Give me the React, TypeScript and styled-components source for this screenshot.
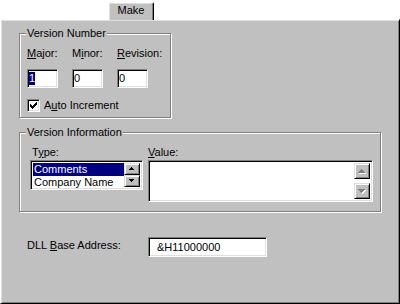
import React from "react";
import styled, { createGlobalStyle } from "styled-components";

const GlobalStyle = createGlobalStyle`
  html, body { margin: 0; padding: 0; background: #fff; }
  body {
    font-family: "Liberation Sans", Arial, sans-serif;
    font-size: 11px;
    color: #000;
  }
  * { box-sizing: border-box; }
`;

const Window = styled.div`
  width: 400px;
  height: 304px;
  display: flex;
  flex-direction: column;
  background: #fff;
`;

const TabStrip = styled.div`
  height: 19px;
  display: flex;
  align-items: flex-end;
  padding-left: 108px;
  position: relative;
  z-index: 1;
`;

const Tab = styled.div`
  width: 46px;
  height: 18px;
  margin-bottom: -1px;
  background: #c0c0c0;
  border-top: 1px solid #fff;
  border-left: 1px solid #fff;
  border-right: 1px solid #000;
  box-shadow: inset -1px 0 #808080, inset 1px 1px #dfdfdf;
  border-radius: 2px 2px 0 0;
  display: flex;
  align-items: center;
  justify-content: center;
  padding-bottom: 2px;
  line-height: 13px;
`;

const Panel = styled.div`
  height: 285px;
  background: #c0c0c0;
  border: 1px solid;
  border-color: #fff #000 #000 #fff;
  box-shadow: inset 1px 1px #dfdfdf, inset -1px -1px #808080;
  padding: 13px 0 0 18px;
  display: flex;
  flex-direction: column;
  align-items: flex-start;
`;

const GroupBox = styled.div<{ $w: number; $h: number; $pad: string; $mt?: number }>`
  position: relative;
  width: ${(p) => p.$w}px;
  height: ${(p) => p.$h}px;
  margin-top: ${(p) => p.$mt ?? 0}px;
  padding: ${(p) => p.$pad};
  border: 1px solid #808080;
  box-shadow: inset 1px 1px #fff, 1px 1px #fff;
`;

const Legend = styled.span`
  position: absolute;
  top: -7px;
  left: 6px;
  padding: 0 1px;
  background: #c0c0c0;
  line-height: 13px;
  white-space: nowrap;
`;

const Label = styled.span<{ $indent?: number }>`
  display: block;
  line-height: 13px;
  padding-left: ${(p) => p.$indent ?? 0}px;
  white-space: nowrap;
`;

const Key = styled.span`
  text-decoration: underline;
`;

const VersionGrid = styled.div`
  display: grid;
  grid-template-columns: repeat(3, 45px);
  row-gap: 9px;
`;

const Field = styled.div<{ $w: number; $h: number; $pl?: number }>`
  width: ${(p) => p.$w}px;
  height: ${(p) => p.$h}px;
  background: #fff;
  border: 1px solid;
  border-color: #808080 #fff #fff #808080;
  box-shadow: inset 1px 1px #000, inset -1px -1px #dfdfdf;
  padding: 1px 1px 1px ${(p) => (p.$pl ?? 0) + 1}px;
  display: flex;
  align-items: center;
  line-height: 13px;
  white-space: nowrap;
`;

const Selected = styled.span`
  display: inline-block;
  background: #000080;
  color: #fff;
  line-height: 13px;
`;

const CheckRow = styled.div`
  display: flex;
  align-items: center;
  gap: 4px;
  margin-top: 11px;
`;

const CheckBox = styled.div`
  width: 13px;
  height: 13px;
  background: #fff;
  border: 1px solid;
  border-color: #808080 #fff #fff #808080;
  box-shadow: inset 1px 1px #000, inset -1px -1px #dfdfdf;
  display: flex;
  align-items: center;
  justify-content: center;
`;

const InfoGrid = styled.div`
  display: grid;
  grid-template-columns: 113px 225px;
  column-gap: 5px;
  row-gap: 1px;
  align-items: start;
`;

const ListBox = styled(Field)`
  padding: 2px;
  align-items: stretch;
`;

const ListItems = styled.div`
  flex: 1;
  display: flex;
  flex-direction: column;
`;

const ListItem = styled.div<{ $sel?: boolean }>`
  height: 13px;
  line-height: 13px;
  padding-left: 1px;
  background: ${(p) => (p.$sel ? "#000080" : "transparent")};
  color: ${(p) => (p.$sel ? "#fff" : "#000")};
`;

const ScrollBar = styled.div`
  width: 16px;
  display: flex;
  flex-direction: column;
`;

const ScrollTrack = styled.div`
  flex: 1;
  background: #fff;
`;

const ScrollButton = styled.div<{ $h: number }>`
  height: ${(p) => p.$h}px;
  width: 16px;
  background: #c0c0c0;
  border: 1px solid;
  border-color: #dfdfdf #000 #000 #dfdfdf;
  box-shadow: inset 1px 1px #fff, inset -1px -1px #808080;
  display: flex;
  align-items: center;
  justify-content: center;
`;

const ValueBox = styled(Field)`
  padding: 2px;
  align-items: stretch;
  justify-content: flex-end;
`;

const DllRow = styled.div`
  display: flex;
  align-items: flex-start;
  margin-top: 25px;
`;

const DllLabel = styled(Label)`
  width: 121px;
  margin-left: 8px;
  margin-top: 2px;
`;

const CheckMark = () => {
  const rows: [number, number][][] = [
    [[6, 6]],
    [[5, 6]],
    [[0, 0], [4, 6]],
    [[0, 1], [3, 5]],
    [[0, 4]],
    [[1, 3]],
    [[2, 2]],
  ];
  return (
    <svg width="7" height="7" viewBox="0 0 7 7" shapeRendering="crispEdges">
      {rows.map((segs, y) =>
        segs.map(([a, b], i) => (
          <rect key={`${y}-${i}`} x={a} y={y} width={b - a + 1} height={1} fill="#000" />
        ))
      )}
    </svg>
  );
};

const Arrow = ({ dir, size, disabled }: { dir: "up" | "down"; size: "sm" | "md"; disabled?: boolean }) => {
  const base: [number, number][] =
    size === "sm"
      ? [[2, 2], [1, 3], [0, 4]]
      : [[3, 3], [2, 4], [1, 5], [0, 6]];
  const w = size === "sm" ? 5 : 7;
  const h = base.length;
  const rows = dir === "up" ? base : [...base].reverse();
  const draw = (dx: number, dy: number, fill: string) =>
    rows.map(([a, b], y) => (
      <rect key={`${fill}-${y}`} x={a + dx} y={y + dy} width={b - a + 1} height={1} fill={fill} />
    ));
  return (
    <svg width={w + 1} height={h + 1} viewBox={`0 0 ${w + 1} ${h + 1}`} shapeRendering="crispEdges">
      {disabled && draw(1, 1, "#fff")}
      {draw(0, 0, disabled ? "#808080" : "#000")}
    </svg>
  );
};

export default function App() {
  return (
    <>
      <GlobalStyle />
      <Window>
        <TabStrip>
          <Tab>Make</Tab>
        </TabStrip>
        <Panel>
          <GroupBox $w={152} $h={85} $pad="13px 0 0 7px">
            <Legend>Version Number</Legend>
            <VersionGrid>
              <Label><Key>M</Key>ajor:</Label>
              <Label>M<Key>i</Key>nor:</Label>
              <Label><Key>R</Key>evision:</Label>
              <Field $w={31} $h={19}>
                <Selected>1</Selected>
              </Field>
              <Field $w={31} $h={19}>0</Field>
              <Field $w={31} $h={19}>0</Field>
            </VersionGrid>
            <CheckRow>
              <CheckBox>
                <CheckMark />
              </CheckBox>
              <Label>A<Key>u</Key>to Increment</Label>
            </CheckRow>
          </GroupBox>

          <GroupBox $w={362} $h={80} $pad="13px 0 0 10px" $mt={14}>
            <Legend>Version Information</Legend>
            <InfoGrid>
              <Label $indent={2}>T<Key>y</Key>pe:</Label>
              <Label><Key>V</Key>alue:</Label>
              <ListBox $w={113} $h={30}>
                <ListItems>
                  <ListItem $sel>Comments</ListItem>
                  <ListItem>Company Name</ListItem>
                </ListItems>
                <ScrollBar>
                  <ScrollButton $h={13}>
                    <Arrow dir="up" size="sm" />
                  </ScrollButton>
                  <ScrollButton $h={13}>
                    <Arrow dir="down" size="sm" />
                  </ScrollButton>
                </ScrollBar>
              </ListBox>
              <ValueBox $w={225} $h={42}>
                <ScrollBar>
                  <ScrollButton $h={16}>
                    <Arrow dir="up" size="md" disabled />
                  </ScrollButton>
                  <ScrollTrack />
                  <ScrollButton $h={16}>
                    <Arrow dir="down" size="md" disabled />
                  </ScrollButton>
                </ScrollBar>
              </ValueBox>
            </InfoGrid>
          </GroupBox>

          <DllRow>
            <DllLabel>DLL <Key>B</Key>ase Address:</DllLabel>
            <Field $w={119} $h={20} $pl={7}>&amp;H11000000</Field>
          </DllRow>
        </Panel>
      </Window>
    </>
  );
}
